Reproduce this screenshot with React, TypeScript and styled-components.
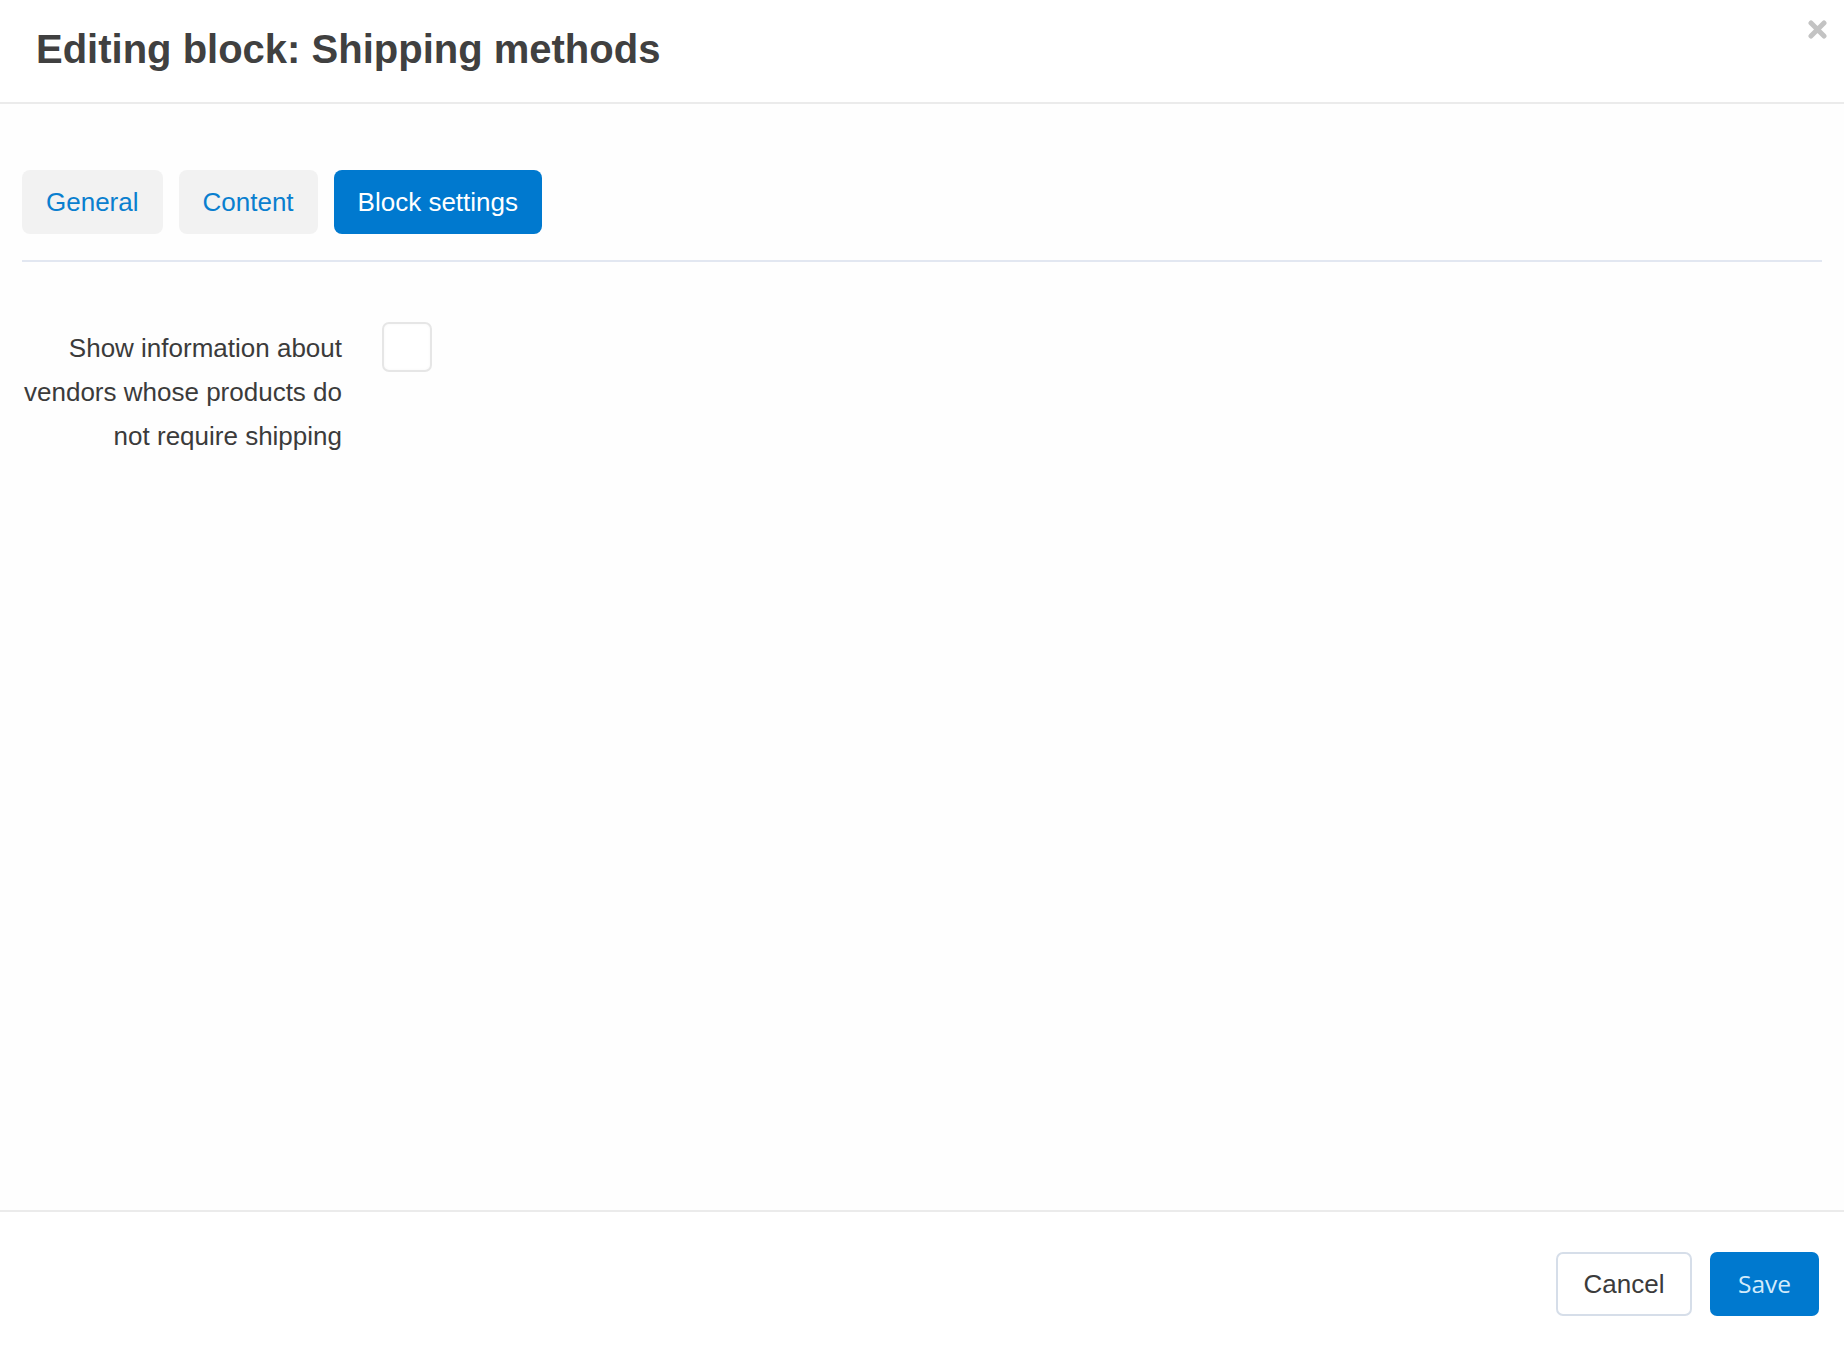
import React, { useState } from "react";
import styled, { createGlobalStyle } from "styled-components";

const GlobalStyle = createGlobalStyle`
  html, body {
    margin: 0;
    padding: 0;
    background: #ffffff;
  }
  body {
    font-family: "Liberation Sans", Arial, sans-serif;
    color: #3b3b3b;
  }
  * { box-sizing: border-box; }
`;

const Modal = styled.div`
  position: relative;
  display: flex;
  flex-direction: column;
  min-height: 100vh;
  background: #ffffff;
`;

const Header = styled.header`
  display: flex;
  align-items: center;
  height: 104px;
  padding: 0 36px 4px 36px;
  border-bottom: 2px solid #ebebeb;
  background: #ffffff;
`;

const Title = styled.h1`
  margin: 0;
  font-size: 40px;
  font-weight: 700;
  color: #404040;
  letter-spacing: 0;
`;

const CloseButton = styled.button`
  position: absolute;
  top: 19px;
  right: 17px;
  width: 20px;
  height: 20px;
  padding: 0;
  border: none;
  background: transparent;
  cursor: pointer;
  display: flex;
  align-items: center;
  justify-content: center;
`;

const Body = styled.main`
  flex: 1;
  display: flex;
  flex-direction: column;
  padding: 66px 22px 0 22px;
  background: #fefefe;
`;

const TabBar = styled.nav`
  display: flex;
  gap: 16px;
  padding-bottom: 26px;
  border-bottom: 2px solid #e2e7f1;
`;

const Tab = styled.button<{ $active?: boolean }>`
  height: 64px;
  padding: 0 24px;
  border: none;
  border-radius: 8px;
  font-family: "Liberation Sans", Arial, sans-serif;
  font-size: 26px;
  cursor: pointer;
  background: ${(p) => (p.$active ? "#0079cf" : "#f2f2f2")};
  color: ${(p) => (p.$active ? "#ffffff" : "#0a7fcf")};
`;

const FormRow = styled.div`
  display: flex;
  align-items: flex-start;
  gap: 40px;
  margin-top: 60px;
`;

const Label = styled.label`
  width: 320px;
  margin-top: 4px;
  text-align: right;
  font-size: 26px;
  line-height: 44px;
  color: #3b3b3b;
`;

const CheckBox = styled.button<{ $checked?: boolean }>`
  width: 50px;
  height: 50px;
  padding: 0;
  border: 2px solid #e6e6e6;
  border-radius: 7px;
  background: #ffffff;
  box-shadow: inset 0 0 3px rgba(0, 0, 0, 0.04);
  cursor: pointer;
  display: flex;
  align-items: center;
  justify-content: center;
`;

const Footer = styled.footer`
  display: flex;
  justify-content: flex-end;
  align-items: flex-start;
  gap: 18px;
  height: 145px;
  padding: 40px 25px 0 0;
  border-top: 2px solid #ebebeb;
  background: #ffffff;
`;

const CancelButton = styled.button`
  width: 136px;
  height: 64px;
  padding-top: 2px;
  border: 2px solid #d6dee9;
  border-radius: 7px;
  background: #ffffff;
  color: #3b3b3b;
  font-family: "Liberation Sans", Arial, sans-serif;
  font-size: 26px;
  cursor: pointer;
`;

const SaveButton = styled.button`
  width: 109px;
  height: 64px;
  padding: 0 0 2px 0;
  border: none;
  border-radius: 7px;
  background: #0079cf;
  color: #d3ebfb;
  font-family: "Open Sans", "Noto Sans", sans-serif;
  font-size: 24.5px;
  cursor: pointer;
`;

const tabs = ["General", "Content", "Block settings"];

export default function App() {
  const [active, setActive] = useState(2);
  const [checked, setChecked] = useState(false);
  return (
    <Modal>
      <GlobalStyle />
      <Header>
        <Title>Editing block: Shipping methods</Title>
      </Header>
      <CloseButton aria-label="Close">
        <svg width="19" height="19" viewBox="0 0 19 19">
          <path
            d="M3 3 L16 16 M16 3 L3 16"
            stroke="#c3c3c3"
            strokeWidth="5"
            strokeLinecap="round"
          />
        </svg>
      </CloseButton>
      <Body>
        <TabBar>
          {tabs.map((t, i) => (
            <Tab key={t} $active={i === active} onClick={() => setActive(i)}>
              {t}
            </Tab>
          ))}
        </TabBar>
        <FormRow>
          <Label>
            Show information about vendors whose products do not require
            shipping
          </Label>
          <CheckBox $checked={checked} onClick={() => setChecked(!checked)} />
        </FormRow>
      </Body>
      <Footer>
        <CancelButton>Cancel</CancelButton>
        <SaveButton>Save</SaveButton>
      </Footer>
    </Modal>
  );
}
